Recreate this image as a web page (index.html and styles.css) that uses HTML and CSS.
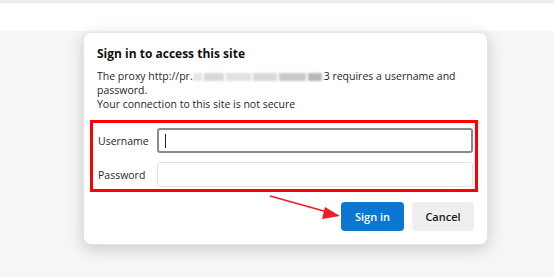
FILE: index.html
```html
<!DOCTYPE html>
<html>
<head>
<meta charset="utf-8">
<link rel="stylesheet" href="styles.css">
</head>
<body>
<div class="topstrip"></div>
<div class="band"></div>
<div class="stage">
  <div class="dialog">
    <h1 class="title">Sign in to access this site</h1>
    <p class="desc">The proxy http://pr.<span class="blur"><i class="b1"></i><i class="b2"></i><i class="b3"></i><i class="b4"></i><i class="b5"></i><i class="b6"></i></span>3 requires a username and password.<br>Your connection to this site is not secure</p>
    <div class="fields">
      <label class="lbl">Username</label>
      <div class="input focused"><span class="caret"></span></div>
      <label class="lbl">Password</label>
      <div class="input"></div>
    </div>
    <div class="actions">
      <button class="btn primary">Sign in</button>
      <button class="btn secondary">Cancel</button>
    </div>
  </div>
  <svg class="arrow" width="90" height="34" viewBox="0 0 90 34">
    <line x1="5" y1="4" x2="66" y2="21" stroke="#ee1c24" stroke-width="1.6"/>
    <polygon points="75,24 60,15 57,27" fill="#ee1c24"/>
  </svg>
</div>
</body>
</html>
```
FILE: styles.css
```css
html, body {
  margin: 0;
  padding: 0;
}
body {
  width: 554px;
  height: 277px;
  overflow: hidden;
  background: #f6f6f6;
  font-family: "Open Sans", "Noto Sans", sans-serif;
  color: #1a1a1a;
}
.topstrip {
  height: 3px;
  background: #ededed;
}
.band {
  height: 28px;
  background: #ffffff;
}
.stage {
  position: relative;
  padding: 1px 0 0 83px;
}
.dialog {
  width: 405px;
  height: 213px;
  box-sizing: border-box;
  background: #fff;
  border-radius: 8px;
  border: 1px solid #e4e4e4;
  box-shadow: 0 4px 16px rgba(0,0,0,0.18);
  padding: 12px 13px 0 13px;
}
.title {
  margin: 0;
  font-size: 12px;
  font-weight: 700;
  line-height: 18px;
  color: #111;
}
.desc {
  margin: 6px 0 0 0;
  font-size: 10.5px;
  line-height: 14px;
  color: #1f1f1f;
}
.blur {
  display: inline-flex;
  align-items: center;
  height: 10px;
  width: 131px;
  vertical-align: -1px;
  gap: 2px;
}
.blur i {
  display: block;
  height: 8px;
  background: #d8d8d8;
  filter: blur(1px);
}
.b1 { width: 9px; background: #e6e6e6 !important; }
.b2 { width: 20px; }
.b3 { width: 25px; background: #e1e1e1 !important; }
.b4 { width: 24px; }
.b5 { width: 27px; background: #c9c9c9 !important; }
.b6 { width: 14px; background: #b8b8b8 !important; }
.fields {
  margin: 9px 0 0 -7px;
  width: 388px;
  box-sizing: border-box;
  border: 3px solid #ff0000;
  padding: 5px 2px 2px 5px;
  display: grid;
  grid-template-columns: 59px 1fr;
  row-gap: 9px;
  align-items: center;
}
.lbl {
  font-size: 10.5px;
  color: #1f1f1f;
}
.input {
  height: 25px;
  box-sizing: border-box;
  border: 1px solid #e3e3e3;
  border-radius: 3px;
  background: #fff;
  display: flex;
  align-items: center;
  padding-left: 8px;
}
.input.focused {
  border: 2px solid #8a8a8a;
  padding-left: 6px;
}
.caret {
  width: 1px;
  height: 14px;
  background: #222;
}
.actions {
  margin-top: 10px;
  display: flex;
  justify-content: flex-end;
  gap: 8px;
}
.btn {
  height: 29px;
  border: none;
  border-radius: 4px;
  font-family: "Open Sans", "Noto Sans", sans-serif;
  font-size: 11px;
  font-weight: 600;
  padding: 0;
}
.primary {
  width: 63px;
  background: #0b77d2;
  color: #fff;
}
.secondary {
  width: 62px;
  background: #efefef;
  color: #1a1a1a;
}
.arrow {
  position: absolute;
  left: 265px;
  top: 161px;
}
```
